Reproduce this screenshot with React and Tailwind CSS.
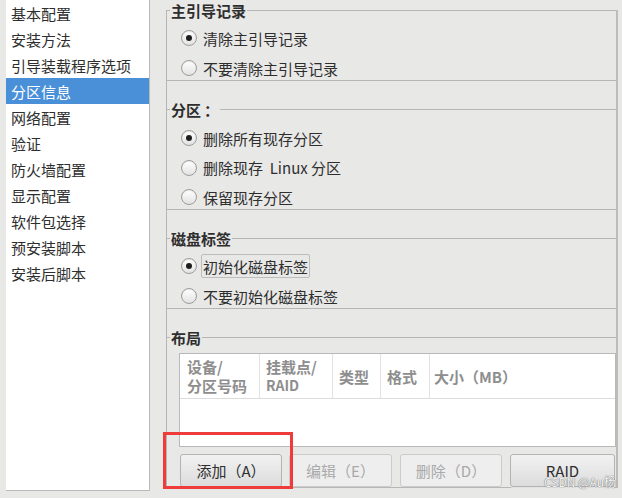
import React from 'react';

const navItems = [
  '基本配置',
  '安装方法',
  '引导装载程序选项',
  '分区信息',
  '网络配置',
  '验证',
  '防火墙配置',
  '显示配置',
  '软件包选择',
  '预安装脚本',
  '安装后脚本',
];

const font = { fontFamily: '"Noto Sans CJK SC", "Noto Sans", sans-serif' };

const Radio = ({ checked, label, focused }) => (
  <div className="flex items-center h-[20px] ml-[14px]">
    <div className="w-[16px] h-[16px] rounded-full border border-[#9c9c9c] bg-linear-to-b from-white to-[#e2e2e2] flex items-center justify-center shadow-[inset_0_1px_1px_rgba(0,0,0,0.08)]">
      {checked && <div className="w-[6px] h-[6px] rounded-full bg-[#1e1e1e]" />}
    </div>
    <span
      className={`ml-[4px] px-[1px] h-[24px] flex items-center border rounded-[2px] text-[15px] text-[#2e2e2e] whitespace-pre leading-none ${
        focused ? 'border-[#bdbdbd]' : 'border-transparent'
      }`}
    >
      {label}
    </span>
  </div>
);

const GroupTitle = ({ children }) => (
  <div className="flex items-center h-[21px] shrink-0">
    <div className="w-[3px] h-px bg-[#b6b6b6]" />
    <span className="px-[1px] text-[15px] font-bold text-[#2e2e2e] leading-none whitespace-pre">{children}</span>
    <div className="flex-1 h-px bg-[#b6b6b6]" />
  </div>
);

const Btn = ({ children, w, disabled }) => (
  <div
    className={`h-[33px] rounded-[3px] border flex items-center justify-center text-[15px] leading-none ${w} ${
      disabled
        ? 'border-[#cbcbcb] bg-[#eeeeee] text-[#a9a9a9]'
        : 'border-[#b3b3b3] bg-linear-to-b from-[#f2f2f2] to-[#dcdcdc] text-[#2e2e2e] shadow-[0_1px_0_rgba(255,255,255,0.6)]'
    }`}
  >
    {children}
  </div>
);

export default function App() {
  return (
    <div className="relative w-[622px] h-[498px] bg-[#e8e8e7] flex items-start overflow-hidden" style={font}>
      {/* left nav list */}
      <div className="pl-[6px]">
        <div className="w-[144px] h-[491px] bg-white border-r border-b border-[#b9b9b9]">
          {navItems.map((item, i) => (
            <div
              key={item}
              className={`h-[26px] flex items-center pl-[5px] text-[15px] leading-none ${
                i === 3 ? 'bg-[#4a90d9] text-white' : 'text-[#2e2e2e]'
              }`}
            >
              {item}
            </div>
          ))}
        </div>
      </div>

      {/* right panel */}
      <div className="pl-[16px] flex flex-col">
        <div className="mt-[10px] w-[452px] flex flex-col border-l border-r-2 border-b border-l-[#b6b6b6] border-r-[#bcbcbc] border-b-[#b6b6b6]">
          <div className="-mt-[10px] flex flex-col">
            <GroupTitle>主引导记录</GroupTitle>
            <div className="h-[60px] shrink-0 border-b border-[#b6b6b6] pt-[7px] flex flex-col gap-[10px]">
              <Radio checked label="清除主引导记录" />
              <Radio label="不要清除主引导记录" />
            </div>

            <div className="mt-[18px]">
              <GroupTitle>{'分区\u2009：'}</GroupTitle>
            </div>
            <div className="h-[90px] shrink-0 border-b border-[#b6b6b6] pt-[8px] flex flex-col gap-[9.5px]">
              <Radio checked label="删除所有现存分区" />
              <Radio label={'删除现存\u00a0 Linux 分区'} />
              <Radio label="保留现存分区" />
            </div>

            <div className="mt-[18px]">
              <GroupTitle>磁盘标签</GroupTitle>
            </div>
            <div className="h-[60px] shrink-0 border-b border-[#b6b6b6] pt-[7px] flex flex-col gap-[10px]">
              <Radio checked focused label="初始化磁盘标签" />
              <Radio label="不要初始化磁盘标签" />
            </div>

            <div className="mt-[18px]">
              <GroupTitle>布局</GroupTitle>
            </div>
            <div className="pl-[12px]">
              {/* partition table */}
              <div className="mt-[5px] h-[94px] bg-white border border-[#b9b9b9]">
                <div className="h-[45px] border-b border-[#dcdcdc] flex text-[15px] font-bold text-[#8e8e8e] leading-[19px]">
                  <div className="w-[80px] border-r border-[#e2e2e2] pl-[7px] flex flex-col justify-center">
                    <span>设备/</span>
                    <span>分区号码</span>
                  </div>
                  <div className="w-[73px] border-r border-[#e2e2e2] pl-[6px] flex flex-col justify-center">
                    <span>挂载点/</span>
                    <span className="text-[14px]">RAID</span>
                  </div>
                  <div className="w-[48px] border-r border-[#e2e2e2] pl-[6px] flex items-center">类型</div>
                  <div className="w-[49px] border-r border-[#e2e2e2] pl-[6px] flex items-center">格式</div>
                  <div className="flex-1 pl-[4px] flex items-center">大小（MB）</div>
                </div>
              </div>

              {/* action buttons */}
              <div className="mt-[7px] ml-[1px] flex h-[33px]">
                <Btn w="w-[102px]">添加（A）</Btn>
                <div className="ml-[7px]">
                  <Btn w="w-[103px]" disabled>编辑（E）</Btn>
                </div>
                <div className="ml-[8px]">
                  <Btn w="w-[102px]" disabled>删除（D）</Btn>
                </div>
                <div className="ml-[8px]">
                  <Btn w="w-[105px]">RAID</Btn>
                </div>
              </div>
            </div>
          </div>
        </div>
      </div>

      {/* red highlight annotation */}
      <div className="absolute left-[163px] top-[432px] w-[130px] h-[57px] border-[3px] border-[#f03b3b]" />

      {/* watermark */}
      <div className="absolute left-[544px] top-[476px] text-[12px] leading-none text-[#f4f4f4] [text-shadow:0_0_1px_#777,0_0_1px_#777]">
        CSDN @Au杨
      </div>
    </div>
  );
}
